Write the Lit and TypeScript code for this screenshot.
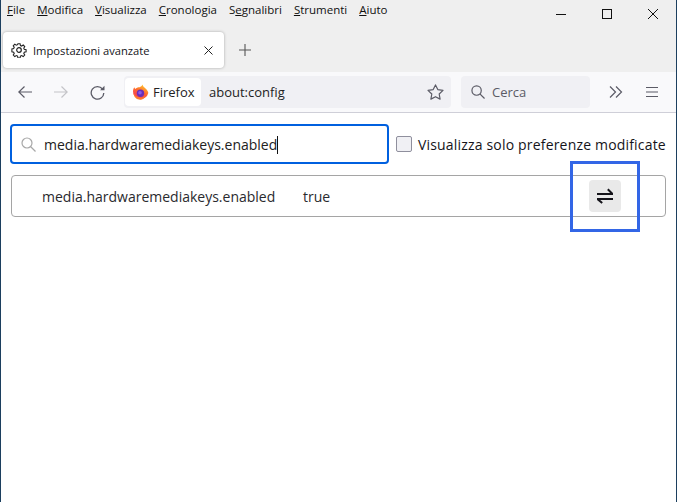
import { LitElement, html, css } from "lit";
import { customElement } from "lit/decorators.js";

@customElement("app-root")
export class AppRoot extends LitElement {
  static styles = css`
    :host { display: block; width: 677px; height: 502px; position: relative; overflow: hidden; background: #fff;
      font-family: "Open Sans", "Noto Sans", sans-serif; color: #15141a; box-sizing: border-box;
      border-left: 1px solid #1c3f5f; border-right: 1px solid #1c3f5f; }
    * { box-sizing: border-box; }
    svg { display: block; flex: none; }
    .titlebar { background: #efefef; height: 72px; display: flex; flex-direction: column; }
    .top { display: flex; height: 32px; justify-content: space-between; align-items: flex-start; }
    .menu { display: flex; gap: 12px; padding: 2px 0 0 6px; font-size: 11.5px; line-height: 16px; color: #111; }
    .menu u { text-underline-offset: 1px; }
    .win { display: flex; align-items: center; padding-right: 18px; gap: 36px; height: 28px; }
    .tabs { display: flex; align-items: center; padding-left: 2px; height: 36px; }
    .tab { width: 221px; height: 36px; background: #fff; border-radius: 4px; box-shadow: 0 0 3px rgba(0,0,0,.3);
      display: flex; align-items: center; padding: 0 11px 0 8px; gap: 6px; font-size: 11.2px; }
    .tab span { flex: 1; white-space: nowrap; }
    .plus { margin-left: 15px; }
    .toolbar { background: #f9f9fb; height: 41px; border-bottom: 1px solid #cfcfd8; display: flex; align-items: center; padding: 0 0 0 17px; }
    .nav { display: flex; align-items: center; gap: 22px; margin-right: 19px; }
    .url { width: 327px; height: 32px; background: #f0f0f4; border-radius: 4px; display: flex; align-items: center; padding-left: 1px; font-size: 13px; color: #222; }
    .identity { background: #fff; height: 28px; border-radius: 4px; display: flex; align-items: center; gap: 4px; padding: 0 7px; width: 76px; font-size: 13px; color: #222; }
    .addr { flex: 1; padding-left: 8px; }
    .star { margin-right: 7px; }
    .search { width: 129px; height: 32px; margin-left: 10px; background: #f0f0f4; border-radius: 4px; display: flex; align-items: center; gap: 7px; padding-left: 10px; font-size: 13px; color: #5b5b66; }
    .more { margin-left: 19px; }
    .burger { margin-left: 23px; }
    .content { padding: 11px 10px 0 10px; display: flex; flex-direction: column; gap: 11px; }
    .filter { display: flex; align-items: center; margin-left: -1px; }
    .input { width: 379px; height: 40px; border: 2px solid #0060df; border-radius: 4px; display: flex; align-items: center; padding-left: 9px; gap: 8px; font-size: 14px; color: #222; }
    .caret { display: inline-block; width: 1px; height: 18px; background: #111; vertical-align: -4px; }
    .check { margin-left: 7px; display: flex; align-items: center; gap: 6px; font-size: 14px; letter-spacing: .18px; white-space: nowrap; }
    .box { width: 16px; height: 16px; border: 1px solid #8f8f9d; border-radius: 2px; background: #f0f0f4; }
    .row { width: 655px; height: 42px; border: 1px solid #a5a5a5; border-radius: 4px; display: flex; align-items: center; padding-left: 30px; font-size: 14px; color: #2a2a2e; }
    .name { width: 261px; }
    .val { flex: 1; }
    .toggle { width: 32px; height: 32px; background: #e9e9e9; border-radius: 4px; display: flex; align-items: center; justify-content: center; margin-right: 44px; }
    .mark { position: absolute; left: 569px; top: 161px; width: 70px; height: 71px; border: 3px solid #3366e6; pointer-events: none; }
  `;

  render() {
    return html`
      <div class="titlebar">
        <div class="top">
          <div class="menu">
            <span><u>F</u>ile</span><span><u>M</u>odifica</span><span><u>V</u>isualizza</span><span><u>C</u>ronologia</span><span>S<u>e</u>gnalibri</span><span><u>S</u>trumenti</span><span><u>A</u>iuto</span>
          </div>
          <div class="win">
            <svg width="10" height="10"><path d="M0 5.500h10" stroke="#111"/></svg>
            <svg width="10" height="10"><rect x=".5" y=".5" width="9" height="9" fill="none" stroke="#111"/></svg>
            <svg width="10" height="10"><path d="M0 0l10 10M10 0L0 10" stroke="#111"/></svg>
          </div>
        </div>
        <div class="tabs">
          <div class="tab">
            <svg width="16" height="16" viewBox="0 0 16 16" fill="none" stroke="#222" stroke-width="1.200"><circle cx="8" cy="8" r="2.300"/><path d="M6.800 1h2.400l.4 2 1.300.6 1.800-1.100 1.700 1.700-1.100 1.800.6 1.300 2 .4v2.400l-2 .4-.6 1.300 1.100 1.800-1.700 1.700-1.800-1.100-1.300.6-.4 2H6.800l-.4-2-1.300-.6-1.800 1.100-1.700-1.700 1.100-1.800-.6-1.300-2-.4V6.800l2-.4.6-1.300-1.100-1.800 1.700-1.700 1.800 1.100 1.300-.6z" transform="translate(.8 .8) scale(.9)"/></svg>
            <span>Impostazioni avanzate</span>
            <svg width="9" height="9"><path d="M.5.5l8 8M8.500.5l-8 8" stroke="#222"/></svg>
          </div>
          <svg class="plus" width="12" height="12"><path d="M6 0v12M0 6h12" stroke="#555" stroke-width="1.100"/></svg>
        </div>
      </div>
      <div class="toolbar">
        <div class="nav">
          <svg width="14" height="12" viewBox="0 0 14 12" fill="none" stroke="#5b5b66" stroke-width="1.200"><path d="M.5 6H14M6.500.5L.8 6l5.700 5.500"/></svg>
          <svg width="14" height="12" viewBox="0 0 14 12" fill="none" stroke="#c4c4c8" stroke-width="1.200"><path d="M0 6h13.500M7.500.5L13.200 6l-5.700 5.500"/></svg>
          <svg width="15" height="15" viewBox="0 0 15 15" fill="none" stroke="#5b5b66" stroke-width="1.300"><path d="M12.500 4A6.300 6.300 0 1 0 13.800 8"/><path d="M14.500 .8v4.400h-4.400z" fill="#5b5b66" stroke="none"/></svg>
        </div>
        <div class="url">
          <div class="identity">
            <svg width="17" height="17" viewBox="0 0 17 17"><defs><linearGradient id="f" x1="0.700" y1="0" x2="0.200" y2="1"><stop offset="0" stop-color="#ffc92e"/><stop offset=".45" stop-color="#ff6a2c"/><stop offset="1" stop-color="#ee2a6a"/></linearGradient></defs><path d="M10.500.5c.3 2 2 3 3.300 4.200 1.500 1.400 2.500 3 2.500 4.300A7.700 7.700 0 1 1 1.200 5.800c.2-1.200.7-2 1.300-2.600 0 .8.300 1.300.8 1.700C4.500 3.500 6.500 3 7.500 3.200 8.800 2.800 10 1.800 10.500.5z" fill="url(#f)"/><circle cx="8.500" cy="9.300" r="3.700" fill="#6b2fb8"/><circle cx="8" cy="8.800" r="1.800" fill="#8a5ce6"/><path d="M1.500 9c1 1.500 2.500 4 7 4.500 2 .2 4-.6 5-2-1 3-3 4.200-5 4.200C4.500 15.700 1.700 13 1.500 9z" fill="#ff7a2c"/></svg>
            <span>Firefox</span>
          </div>
          <span class="addr">about:config</span>
          <svg class="star" width="17" height="16" viewBox="0 0 17 16" fill="none" stroke="#5b5b66" stroke-width="1.200" stroke-linejoin="round"><path d="M8.500.9l2.300 4.700 5.200.8-3.800 3.600.9 5.100-4.600-2.400-4.600 2.400.9-5.100L1 6.400l5.200-.8z"/></svg>
        </div>
        <div class="search">
          <svg width="14" height="14" viewBox="0 0 15 15" fill="none" stroke="#5b5b66" stroke-width="1.300"><circle cx="6" cy="6" r="5"/><path d="M9.500 9.500l5 5"/></svg>
          <span>Cerca</span>
        </div>
        <svg class="more" width="14" height="12" viewBox="0 0 14 12" fill="none" stroke="#5b5b66" stroke-width="1.200"><path d="M1 .5L6.500 6 1 11.500M7 .5L12.500 6 7 11.500"/></svg>
        <svg class="burger" width="12" height="10"><path d="M0 .5h12M0 5h12M0 9.500h12" stroke="#5b5b66" stroke-width="1.100"/></svg>
      </div>
      <div class="content">
        <div class="filter">
          <div class="input">
            <svg width="15" height="15" viewBox="0 0 15 15" fill="none" stroke="#a8a8a8" stroke-width="1.200"><circle cx="6" cy="6" r="5"/><path d="M9.500 9.500l5 5"/></svg>
            <span>media.hardwaremediakeys.enabled<span class="caret"></span></span>
          </div>
          <label class="check"><span class="box"></span><span>Visualizza solo preferenze modificate</span></label>
        </div>
        <div class="row">
          <span class="name">media.hardwaremediakeys.enabled</span>
          <span class="val">true</span>
          <div class="toggle">
            <svg width="16" height="16" viewBox="0 0 16 16" fill="none" stroke="#15141a" stroke-width="2"><path d="M0 6h15.500L10.800 1.300M16 11H.5l4.700 4"/></svg>
          </div>
        </div>
      </div>
      <div class="mark"></div>
    `;
  }
}
